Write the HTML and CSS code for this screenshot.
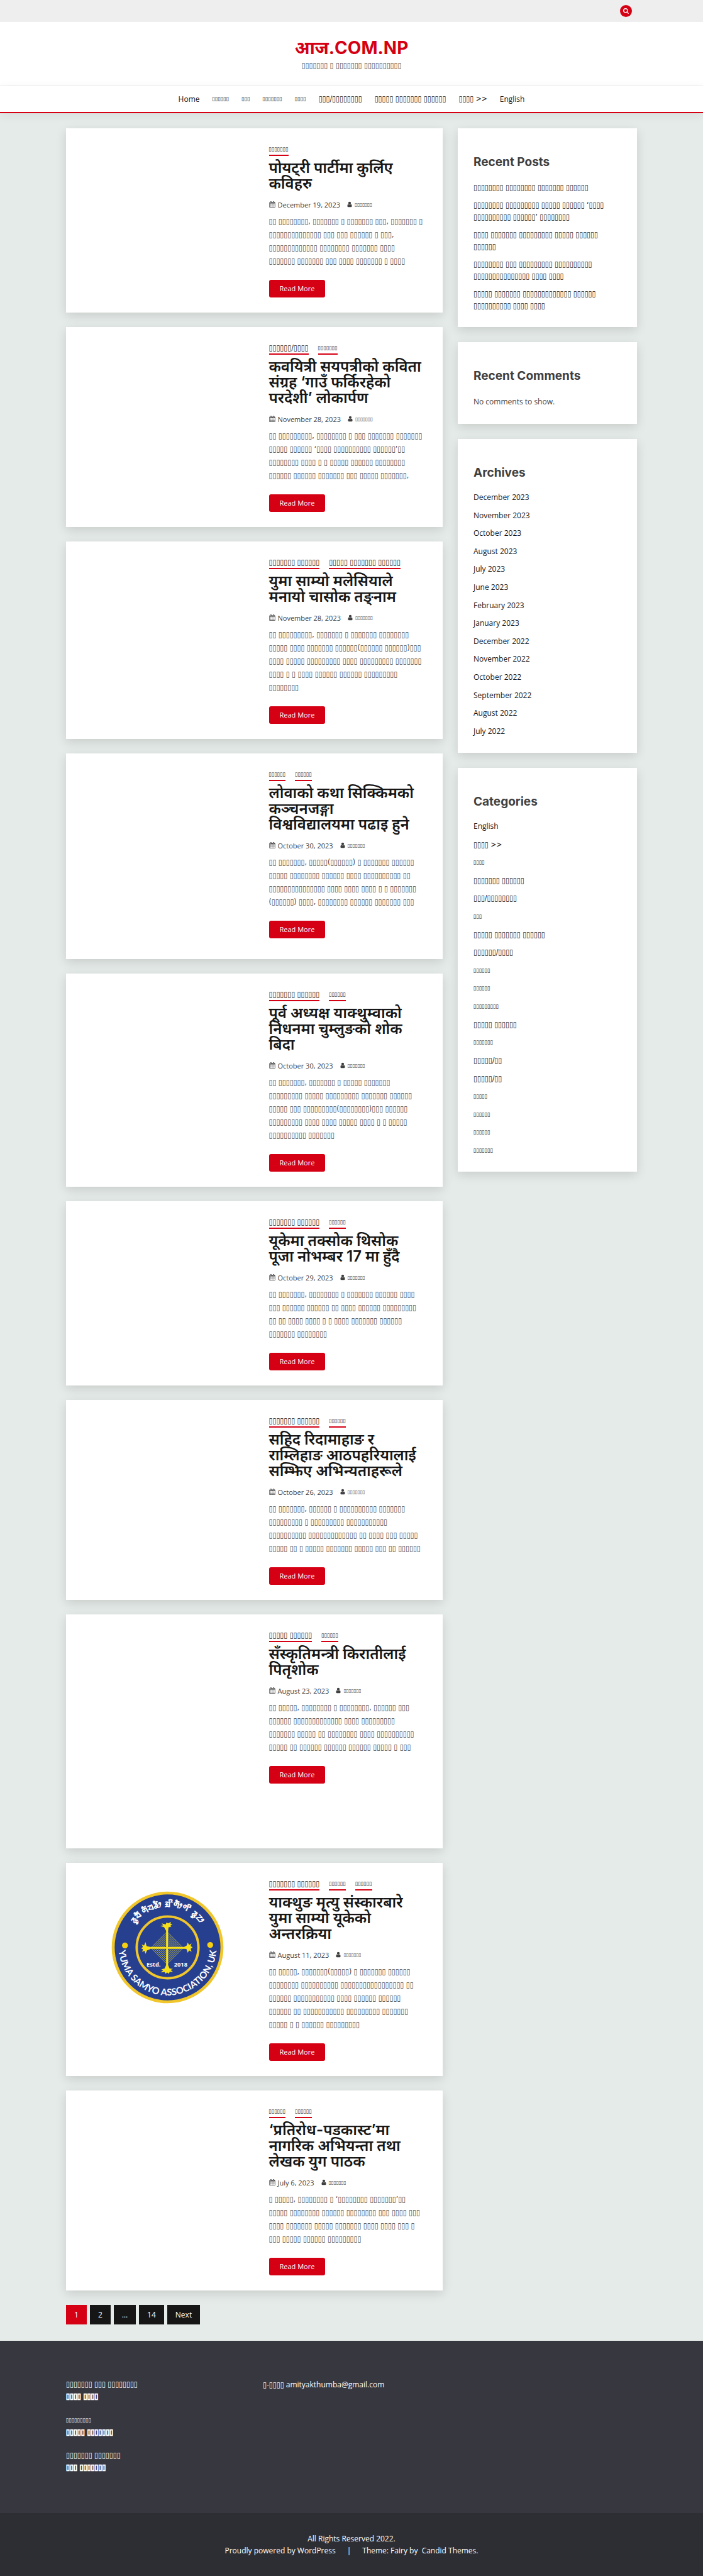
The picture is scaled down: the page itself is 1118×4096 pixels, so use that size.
FILE: index.html
```html
<!DOCTYPE html>
<html lang="ne">
<head>
<meta charset="utf-8">
<meta name="viewport" content="width=device-width, initial-scale=1">
<title>आज.COM.NP</title>
<link rel="stylesheet" href="styles.css">
</head>
<body>
<svg class="sprite" aria-hidden="true">
  <symbol id="calendar" viewBox="0 0 1792 1792"><path d="M192 1664h288v-288h-288v288zm352 0h320v-288h-320v288zm-352-352h288v-320h-288v320zm352 0h320v-320h-320v320zm-352-384h288v-288h-288v288zm736 736h320v-288h-320v288zm-384-736h320v-288h-320v288zm768 736h288v-288h-288v288zm-384-352h320v-320h-320v320zm-352-864v-288q0-13-9.5-22.5t-22.5-9.5h-64q-13 0-22.5 9.5t-9.5 22.5v288q0 13 9.5 22.5t22.5 9.5h64q13 0 22.5-9.5t9.5-22.5zm736 864h288v-320h-288v320zm-384-384h320v-288h-320v288zm384 0h288v-288h-288v288zm32-480v-288q0-13-9.5-22.5t-22.5-9.5h-64q-13 0-22.5 9.5t-9.5 22.5v288q0 13 9.5 22.5t22.5 9.5h64q13 0 22.5-9.5t9.5-22.5zm384-64v1280q0 52-38 90t-90 38h-1408q-52 0-90-38t-38-90v-1280q0-52 38-90t90-38h128v-96q0-66 47-113t113-47h64q66 0 113 47t47 113v96h384v-96q0-66 47-113t113-47h64q66 0 113 47t47 113v96h128q52 0 90 38t38 90z"/></symbol>
  <symbol id="user" viewBox="256 0 1280 1792"><path d="M1536 1399q0 109-62.500 187t-150.500 78h-854q-88 0-150.500-78t-62.500-187q0-85 8.500-160.500t31.500-152 58.500-131 94-89 134.500-34.500q131 128 313 128t313-128q76 0 134.500 34.500t94 89 58.500 131 31.500 152 8.500 160.500zm-256-887q0 159-112.500 271.500t-271.500 112.500-271.500-112.500-112.500-271.500 112.500-271.500 271.500-112.500 271.500 112.500 112.500 271.500z"/></symbol>
</svg>

<div class="topbar"><div class="container">
  <button class="search" type="button" aria-label="Search"><svg viewBox="0 0 16 16"><circle cx="7" cy="7" r="4.500"/><path d="M10.500 10.500 14 14"/></svg></button>
</div></div>

<header class="brand">
  <a class="brand-name" href="#">आज.COM.NP</a>
  <p class="np brand-tag">7 1 7 10</p>
</header>

<nav class="menu">
  <a href="#">Home</a>
  <a class="np sm" href="#">6</a>
  <a class="np sm" href="#">3</a>
  <a class="np sm" href="#">7</a>
  <a class="np sm" href="#">4</a>
  <a class="np" href="#">3/8</a>
  <a class="np" href="#">5 7 6</a>
  <a class="np" href="#">4 &gt;&gt;</a>
  <a href="#">English</a>
</nav>

<div class="container layout">
<main class="posts">

<article class="card"><div class="thumb"></div><div class="post">
  <div class="tags"><a class="np sm" href="#">7</a></div>
  <h2><a href="#">पोयट्री पार्टीमा कुर्लिए<br>कविहरु</a></h2>
  <div class="meta"><svg class="cal"><use href="#calendar"/></svg><a href="#">December 19, 2023</a><svg class="usr"><use href="#user"/></svg><a class="np xs" href="#">7</a></div>
  <p class="np">2 8, 7 1 7 3, 7 1<br>14 3 3 6 1 3,<br>13 8 7 4<br>7 7 3 4 7 1 4</p>
  <a class="more" href="#">Read More</a>
</div></article>

<article class="card"><div class="thumb"></div><div class="post">
  <div class="tags"><a class="np" href="#">6/4</a><a class="np sm" href="#">7</a></div>
  <h2><a href="#">कवयित्री सयपत्रीको कविता<br>संग्रह ‘गाउँ फर्किरहेको<br>परदेशी’ लोकार्पण</a></h2>
  <div class="meta"><svg class="cal"><use href="#calendar"/></svg><a href="#">November 28, 2023</a><svg class="usr"><use href="#user"/></svg><a class="np xs" href="#">7</a></div>
  <p class="np">2 9, 8 1 3 7 7<br>5 6 ‘4 10 6’2<br>8 4 1 1 5 6 8<br>6 6 7 3 5 7,</p>
  <a class="more" href="#">Read More</a>
</div></article>

<article class="card"><div class="thumb"></div><div class="post">
  <div class="tags"><a class="np" href="#">7 6</a><a class="np" href="#">5 7 6</a></div>
  <h2><a href="#">युमा साम्यो मलेसियाले<br>मनायो चासोक तङ्नाम</a></h2>
  <div class="meta"><svg class="cal"><use href="#calendar"/></svg><a href="#">November 28, 2023</a><svg class="usr"><use href="#user"/></svg><a class="np xs" href="#">7</a></div>
  <p class="np">2 9, 7 1 7 8<br>5 4 7 6(6 6)3<br>4 5 9 4 9 7<br>4 1 1 4 6 6 9<br>8</p>
  <a class="more" href="#">Read More</a>
</div></article>

<article class="card"><div class="thumb thumb-medium"></div><div class="post">
  <div class="tags"><a class="np sm" href="#">6</a><a class="np sm" href="#">6</a></div>
  <h2><a href="#">लोवाको कथा सिक्किमको<br>कञ्चनजङ्गा<br>विश्वविद्यालयमा पढाइ हुने</a></h2>
  <div class="meta"><svg class="cal"><use href="#calendar"/></svg><a href="#">October 30, 2023</a><svg class="usr"><use href="#user"/></svg><a class="np xs" href="#">7</a></div>
  <p class="np">2 7, 5(6) 1 7 6<br>5 8 6 4 10 2<br>15 4 4 4 1 1 7<br>(6) 4, 8 6 7 3</p>
  <a class="more" href="#">Read More</a>
</div></article>

<article class="card"><div class="thumb"></div><div class="post">
  <div class="tags"><a class="np" href="#">7 6</a><a class="np sm" href="#">6</a></div>
  <h2><a href="#">पूर्व अध्यक्ष याक्थुम्वाको<br>निधनमा चुम्लुङको शोक<br>बिदा</a></h2>
  <div class="meta"><svg class="cal"><use href="#calendar"/></svg><a href="#">October 30, 2023</a><svg class="usr"><use href="#user"/></svg><a class="np xs" href="#">7</a></div>
  <p class="np">2 7, 7 1 5 7<br>9 5 9 7 6<br>5 3 9(8)3 6<br>9 4 4 5 4 1 1 5<br>10 7</p>
  <a class="more" href="#">Read More</a>
</div></article>

<article class="card"><div class="thumb"></div><div class="post">
  <div class="tags"><a class="np" href="#">7 6</a><a class="np sm" href="#">6</a></div>
  <h2><a href="#">यूकेमा तक्सोक थिसोक<br>पूजा नोभम्बर 17 मा हुँदै</a></h2>
  <div class="meta"><svg class="cal"><use href="#calendar"/></svg><a href="#">October 29, 2023</a><svg class="usr"><use href="#user"/></svg><a class="np xs" href="#">7</a></div>
  <p class="np">2 7, 8 1 7 6 4<br>3 6 6 2 4 6 9<br>2 2 4 4 1 1 4 7 6<br>7 8</p>
  <a class="more" href="#">Read More</a>
</div></article>

<article class="card"><div class="thumb"></div><div class="post">
  <div class="tags"><a class="np" href="#">7 6</a><a class="np sm" href="#">6</a></div>
  <h2><a href="#">सहिद रिदामाहाङ र<br>राम्लिहाङ आठपहरियालाई<br>सम्झिए अभिन्यताहरूले</a></h2>
  <div class="meta"><svg class="cal"><use href="#calendar"/></svg><a href="#">October 26, 2023</a><svg class="usr"><use href="#user"/></svg><a class="np xs" href="#">7</a></div>
  <p class="np">2 7, 6 1 10 7<br>9 1 9 11<br>10 13 2 4 3 5<br>5 2 1 5 7 5 3 2 6</p>
  <a class="more" href="#">Read More</a>
</div></article>

<article class="card"><div class="thumb thumb-tall"></div><div class="post">
  <div class="tags"><a class="np" href="#">5 6</a><a class="np sm" href="#">6</a></div>
  <h2><a href="#">सँस्कृतिमन्त्री किरातीलाई<br>पितृशोक</a></h2>
  <div class="meta"><svg class="cal"><use href="#calendar"/></svg><a href="#">August 23, 2023</a><svg class="usr"><use href="#user"/></svg><a class="np xs" href="#">7</a></div>
  <p class="np">2 5, 8 1 8, 6 3<br>6 13 4 9<br>7 5 2 8 4 10<br>5 2 6 6 6 5 1 3</p>
  <a class="more" href="#">Read More</a>
</div></article>

<article class="card"><div class="thumb">
  <svg class="emblem" viewBox="0 0 240 240" role="img" aria-label="Yuma Samyo Association, UK">
    <defs>
      <path id="arc-top" d="M37 120a83 83 0 0 1 166 0"/>
      <path id="arc-bottom" d="M20 118a100 100 0 0 0 200 0"/>
    </defs>
    <circle cx="120" cy="120" r="111" fill="#263f8f" stroke="#f0c62b" stroke-width="6"/>
    <circle cx="120" cy="120" r="63" fill="none" stroke="#f0c62b" stroke-width="5"/>
    <circle cx="33" cy="116" r="6" fill="#f8d012"/><circle cx="207" cy="115" r="6" fill="#f8d012"/>
    <g fill="none" stroke="#d6cf3b" stroke-width="1">
      <path d="M119 88l33 33-33 33-33-33z"/><path d="M119 92l29 29-29 29-29-29z"/><path d="M119 96l25 25-25 25-25-25z"/><path d="M119 100l21 21-21 21-21-21z"/><path d="M119 104l17 17-17 17-17-17z"/><path d="M119 108l13 13-13 13-13-13z"/><path d="M119 112l9 9-9 9-9-9z"/>
    </g>
    <g fill="#f7e01a">
      <path d="M117 84h4v74h-4zM82 119h74v4h-74z"/>
      <path d="M117 86l-4-7-8-3 6-1-3-4 8 2 2-4 3 2 6-3-1 4 4 1-5 3 3 2-6 1-1 7z"/>
      <path d="M117 156l-3 7-7 2 4 2-5 4 8-1 2 4 3-3 4 3 1-4 7 0-5-4 5-2-7-1-3-7z"/>
      <path d="M84 119l-7-2-2-8-3 7-5-2 3 5-4 3 4 2-2 5 5-2 2 6 3-7 6-2z"/>
      <path d="M154 119l5-3 2-6 3 5 5-3-2 5 4 3-4 3 2 6-5-3-3 5-2-7-5-2z"/>
    </g>
    <text class="emblem-year" x="77" y="159">Estd.</text>
    <text class="emblem-year" x="133" y="159">2018</text>
    <text class="emblem-script"><textPath href="#arc-top" startOffset="50%">ᤕᤢᤔᤠ ᤛᤠᤔᤕᤥ ᤀᤡᤛᤥᤛᤡ ᤕᤢᤁᤣ</textPath></text>
    <text class="emblem-name"><textPath href="#arc-bottom" startOffset="50%">YUMA SAMYO ASSOCIATION, UK</textPath></text>
  </svg>
</div><div class="post">
  <div class="tags"><a class="np" href="#">7 6</a><a class="np sm" href="#">6</a><a class="np sm" href="#">6</a></div>
  <h2><a href="#">याक्थुङ मृत्यु संस्कारबारे<br>युमा साम्यो यूकेको<br>अन्तरक्रिया</a></h2>
  <div class="meta"><svg class="cal"><use href="#calendar"/></svg><a href="#">August 11, 2023</a><svg class="usr"><use href="#user"/></svg><a class="np xs" href="#">7</a></div>
  <p class="np">2 5, 7(5) 1 7 6<br>8 10 17 2<br>6 11 4 6 6<br>6 2 11 9 7<br>5 1 1 6 9</p>
  <a class="more" href="#">Read More</a>
</div></article>

<article class="card"><div class="thumb"></div><div class="post">
  <div class="tags"><a class="np sm" href="#">6</a><a class="np sm" href="#">6</a></div>
  <h2><a href="#">‘प्रतिरोध-पडकास्ट’मा<br>नागरिक अभियन्ता तथा<br>लेखक युग पाठक</a></h2>
  <div class="meta"><svg class="cal"><use href="#calendar"/></svg><a href="#">July 6, 2023</a><svg class="usr"><use href="#user"/></svg><a class="np xs" href="#">7</a></div>
  <p class="np">1 5, 8 1 ‘8 7’2<br>5 8 6 8 3 4 3<br>4 7 5 7 4 4 3 1<br>3 5 6 9</p>
  <a class="more" href="#">Read More</a>
</div></article>

<nav class="pages"><a class="current" href="#">1</a><a href="#">2</a><span>…</span><a href="#">14</a><a href="#">Next</a></nav>
</main>

<aside class="side">
  <section class="widget"><h3>Recent Posts</h3>
    <ul class="recent">
      <li><a class="np" href="#">8 8 7 6</a></li>
      <li><a class="np" href="#">8 9 5 6 ‘4<br>10 6’ 8</a></li>
      <li><a class="np" href="#">4 7 9 5 6<br>6</a></li>
      <li><a class="np" href="#">8 3 9 10<br>15 4 4</a></li>
      <li><a class="np" href="#">5 7 13 6<br>10 4 4</a></li>
    </ul>
  </section>
  <section class="widget"><h3>Recent Comments</h3><p class="none">No comments to show.</p></section>
  <section class="widget"><h3>Archives</h3>
    <ul class="list archives">
      <li><a href="#">December 2023</a></li><li><a href="#">November 2023</a></li><li><a href="#">October 2023</a></li><li><a href="#">August 2023</a></li><li><a href="#">July 2023</a></li><li><a href="#">June 2023</a></li><li><a href="#">February 2023</a></li><li><a href="#">January 2023</a></li><li><a href="#">December 2022</a></li><li><a href="#">November 2022</a></li><li><a href="#">October 2022</a></li><li><a href="#">September 2022</a></li><li><a href="#">August 2022</a></li><li><a href="#">July 2022</a></li>
    </ul>
  </section>
  <section class="widget"><h3>Categories</h3>
    <ul class="list categories">
      <li><a href="#">English</a></li><li><a class="np" href="#">4 &gt;&gt;</a></li><li><a class="np sm" href="#">4</a></li><li><a class="np" href="#">7 6</a></li><li><a class="np" href="#">3/8</a></li><li><a class="np sm" href="#">3</a></li><li><a class="np" href="#">5 7 6</a></li><li><a class="np" href="#">6/4</a></li><li><a class="np sm" href="#">6</a></li><li><a class="np sm" href="#">6</a></li><li><a class="np sm" href="#">9</a></li><li><a class="np" href="#">5 6</a></li><li><a class="np sm" href="#">7</a></li><li><a class="np" href="#">5/2</a></li><li><a class="np" href="#">5/2</a></li><li><a class="np sm" href="#">5</a></li><li><a class="np sm" href="#">6</a></li><li><a class="np sm" href="#">6</a></li><li><a class="np sm" href="#">7</a></li>
    </ul>
  </section>
</aside>
</div>

<footer>
  <div class="container foot">
    <div class="staff">
      <p class="np">7 3 8<br><strong>4 4</strong></p>
      <p class="np"><span class="sm">9</span><br><strong>5 7</strong></p>
      <p class="np">7 7<br><strong>3 7</strong></p>
    </div>
    <p><span class="np">1-4</span> amityakthumba@gmail.com</p>
  </div>
  <div class="legal">
    <p>All Rights Reserved 2022.</p>
    <p><a href="#">Proudly powered by WordPress</a><span class="bar">|</span>Theme: Fairy by&nbsp; <a href="#">Candid Themes</a>.</p>
  </div>
</footer>
<script src="script.js"></script>
</body>
</html>
```
FILE: script.js
```js
// Nepali placeholder copy is stored as word lengths; expand each number to that many boxes.
function expand(node) {
  if (node.nodeType === Node.TEXT_NODE) {
    node.data = node.data.replace(/\d+/g, n => '▯'.repeat(Number(n)));
  } else {
    node.childNodes.forEach(expand);
  }
}
document.querySelectorAll('.np').forEach(expand);
```
FILE: styles.css
```css
* { box-sizing: border-box; }
body { margin: 0; background: #e5ebe8; color: #404040; font: 12px/19px "Open Sans", sans-serif; }
h2, h3, p, ul { margin: 0; padding: 0; }
ul { list-style: none; }
a { color: inherit; text-decoration: none; }
.sprite { position: absolute; width: 0; height: 0; }
.container { width: 82%; max-width: 908px; margin: 0 auto; }
.np { font-family: "DejaVu Sans Condensed", "DejaVu Sans", sans-serif; font-size: 12px; white-space: nowrap; }
.sm { font-size: 9px; }
.np.xs { font-size: 8px; }

.topbar { background: #eee; }
.topbar .container { display: flex; justify-content: flex-end; padding: 8px; }
.search { display: grid; place-items: center; width: 19px; height: 19px; padding: 0; border: 0; border-radius: 50%; background: #d50014; }
.search svg { width: 11px; height: 11px; fill: none; stroke: #fff; stroke-width: 2; }

.brand { display: flex; flex-direction: column; align-items: center; padding: 22px 0; background: #fff; border-bottom: 1px solid #eee; }
.brand-name { color: #d50014; font: bold 28px/38px Inter, "Noto Sans Devanagari", sans-serif; }
.brand-tag { line-height: 18px; color: #444; }
.menu { display: flex; flex-wrap: wrap; justify-content: center; align-items: center; gap: 20px; min-height: 44px; background: #fff; color: #161616; border-bottom: 2px solid #d50014; box-shadow: 0 4px 16px rgba(0, 0, 0, .06); }

.layout { display: grid; grid-template-columns: minmax(0, 599fr) minmax(0, 285fr); gap: 24px; align-items: start; padding: 24px 0 26px; }
.posts { display: flex; flex-direction: column; gap: 23px; }
.card, .widget { background: #fff; box-shadow: 0 5px 16px rgba(0, 0, 0, .13); }
.card { display: grid; grid-template-columns: 1fr 1fr; }
.thumb { padding: 24px 0 24px 24px; }
.thumb-medium { min-height: 327px; }
.thumb-tall { min-height: 372px; }
.emblem { display: block; width: 187px; margin: 17px auto 0; }
.emblem-year { fill: #fff; font: bold 12px "Open Sans", sans-serif; }
.emblem-script { fill: #fff; font: bold 22px "Open Sans", sans-serif; text-anchor: middle; }
.emblem-name { fill: #fff; font: bold 19px Lato, sans-serif; text-anchor: middle; }

.post { padding: 24px 10px 24px 23px; }
.tags { display: flex; gap: 15px; height: 20px; color: #161616; }
.tags a { line-height: 18px; border-bottom: 2px solid #d50014; }
.post h2 { margin: 6px 0 12px; color: #161616; font: 600 24px/25px Inter, "Noto Sans Devanagari", sans-serif; white-space: nowrap; }
.meta { display: flex; align-items: center; height: 18px; font-size: 11px; }
.meta svg { fill: #404040; margin-right: 4px; }
.cal { width: 10px; height: 10px; }
.meta .usr { width: 8px; height: 10px; margin-left: 11px; }
.post p { margin: 8px 0 19px; line-height: 21px; color: #444; }
.more { display: inline-block; padding: 0 17px; border-radius: 3px; background: #d50014; color: #fff; font-size: 11px; line-height: 28px; vertical-align: top; }

.pages { display: flex; gap: 5px; }
.pages > * { padding: 0 13px; background: #161616; color: #fff; line-height: 31px; }
.pages .current { background: #d50014; }

.side { display: flex; flex-direction: column; gap: 24px; }
.widget { padding: 40px 20px 24px 25px; color: #161616; }
.widget h3 { margin-bottom: 15px; color: #404040; font: bold 19px/28px Inter, sans-serif; }
.recent { display: flex; flex-direction: column; gap: 9px; padding-top: 2px; }
.recent a { display: block; }
.none { padding: 2px 0; color: #404040; }
.list { display: flex; flex-direction: column; justify-content: space-between; }
.list li, .list a { display: block; line-height: 20px; }
.archives { min-height: 392px; }
.categories { min-height: 535px; }

footer { background: #37373f; color: #fff; }
.foot { display: grid; grid-template-columns: repeat(3, 1fr); gap: 31px; padding: 60px 0 63px; }
.staff { display: flex; flex-direction: column; gap: 18px; }
.staff strong { -webkit-text-stroke: 1px #fff; }
.legal { padding: 31px 0; background: #2d2e33; text-align: center; }
.bar { margin: 0 18px; }
```
